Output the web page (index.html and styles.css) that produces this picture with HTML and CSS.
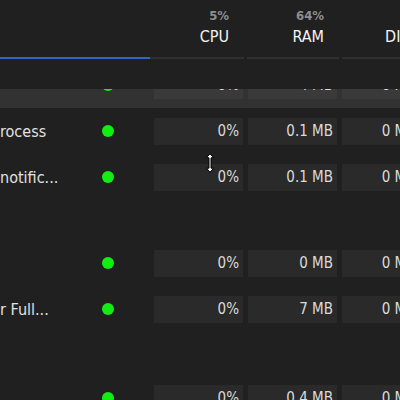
FILE: index.html
```html
<!DOCTYPE html>
<html>
<head>
<meta charset="utf-8">
<link rel="stylesheet" href="styles.css">
</head>
<body>
<div class="app">
  <div class="head">
    <div class="hcol hname"></div>
    <div class="hcol"><span class="pct">5%</span><span class="lbl">CPU</span></div>
    <div class="hcol hsp"><span class="pct">64%</span><span class="lbl">RAM</span></div>
    <div class="hcol hsp"><span class="pct">&nbsp;</span><span class="lbl">DISK</span></div>
  </div>
  <div class="viewport">
    <div class="list">
      <div class="row hover">
        <div class="name"></div>
        <div class="status"><span class="dot"></span></div>
        <div class="cells"><div class="cell">0%</div><div class="cell">4 MB</div><div class="cell">0 MB/s</div></div>
      </div>
      <div class="row">
        <div class="name">rocess</div>
        <div class="status"><span class="dot"></span></div>
        <div class="cells"><div class="cell">0%</div><div class="cell">0.1 MB</div><div class="cell">0 MB/s</div></div>
      </div>
      <div class="row">
        <div class="name">notific...</div>
        <div class="status"><span class="dot"></span></div>
        <div class="cells"><div class="cell">0%</div><div class="cell">0.1 MB</div><div class="cell">0 MB/s</div></div>
      </div>
      <div class="group g1"></div>
      <div class="row">
        <div class="name"></div>
        <div class="status"><span class="dot"></span></div>
        <div class="cells"><div class="cell">0%</div><div class="cell">0 MB</div><div class="cell">0 MB/s</div></div>
      </div>
      <div class="row">
        <div class="name">r Full...</div>
        <div class="status"><span class="dot"></span></div>
        <div class="cells"><div class="cell">0%</div><div class="cell">7 MB</div><div class="cell">0 MB/s</div></div>
      </div>
      <div class="group g2"></div>
      <div class="row">
        <div class="name"></div>
        <div class="status"><span class="dot"></span></div>
        <div class="cells"><div class="cell">0%</div><div class="cell">0.4 MB</div><div class="cell">0 MB/s</div></div>
      </div>
    </div>
  </div>
  <svg class="cursor" width="10" height="20" viewBox="0 0 10 20">
    <path d="M5 0.8 L8.6 4.8 L6 4.8 L6 15.2 L8.6 15.2 L5 19.2 L1.4 15.2 L4 15.2 L4 4.8 L1.4 4.8 Z" fill="#fff" stroke="#000" stroke-width="1" stroke-linejoin="miter"/>
  </svg>
</div>
</body>
</html>
```

FILE: styles.css
```css
html, body {
  margin: 0;
  padding: 0;
  background: #202020;
}
body {
  width: 400px;
  height: 400px;
  overflow: hidden;
  font-family: "DejaVu Sans", Roboto, sans-serif;
  font-stretch: condensed;
  color: #dcdcdc;
}
.app {
  position: relative;
  width: 400px;
  height: 400px;
  overflow: hidden;
}
.head {
  display: grid;
  grid-template-columns: 150px 94px 95px 95px;
  height: 59px;
  margin-bottom: 30px;
}
.hcol {
  display: flex;
  flex-direction: column;
  align-items: flex-end;
  padding: 8px 15px 0 0;
  border-bottom: 2px solid #303030;
  box-sizing: border-box;
  height: 59px;
  white-space: nowrap;
}
.hsp {
  margin-left: 3px;
}
.hname {
  border-bottom-color: #2f66c0;
  padding: 0;
}
.pct {
  font-size: 13px;
  line-height: 16px;
  font-weight: bold;
  color: #8e8e8e;
}
.lbl {
  margin-top: 3px;
  font-size: 16px;
  line-height: 20px;
  color: #f4f4f4;
}
.viewport {
  height: 311px;
  overflow: hidden;
}
.list {
  margin-top: -27px;
  width: 440px;
}
.row {
  display: flex;
  align-items: center;
  height: 46px;
  white-space: nowrap;
}
.row.hover {
  background: #323232;
}
.name {
  flex: 0 0 102px;
  font-size: 16px;
  color: #e2e2e2;
  overflow: hidden;
}
.status {
  flex: 0 0 52px;
  display: flex;
  align-items: center;
}
.dot {
  width: 12px;
  height: 12px;
  margin-left: -0.5px;
  border-radius: 50%;
  background: #12ee12;
}
.cells {
  display: flex;
  flex: 0 0 auto;
  gap: 5px;
}
.cell {
  flex: 0 0 89px;
  height: 27px;
  line-height: 27px;
  box-sizing: border-box;
  padding-right: 4px;
  text-align: right;
  background: #2a2a2a;
  font-size: 15px;
  color: #dadada;
  overflow: hidden;
}
.hover .cell {
  background: #3a3a3a;
}
.group.g1 {
  height: 40px;
}
.group.g2 {
  height: 43px;
}
.cursor {
  position: absolute;
  left: 205px;
  top: 153px;
}
```
